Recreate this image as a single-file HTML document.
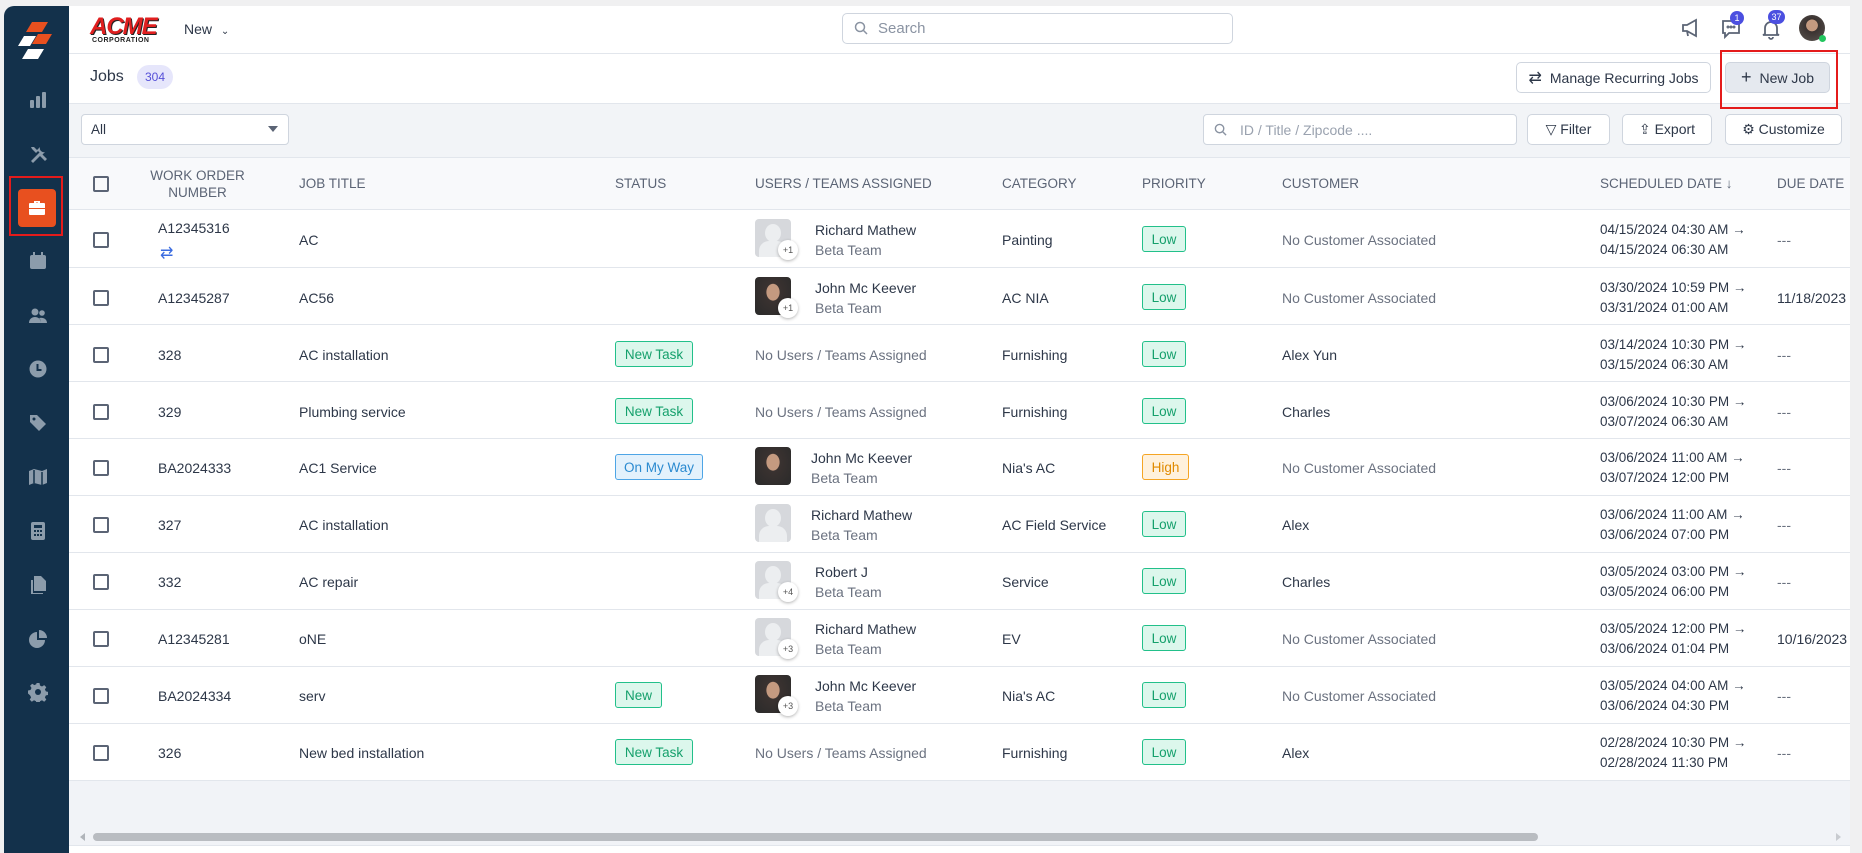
<!DOCTYPE html>
<html><head><meta charset="utf-8"><style>
*{box-sizing:border-box;margin:0;padding:0}
body{width:1862px;height:853px;overflow:hidden;background:#f0f0f1;font-family:"Liberation Sans",sans-serif;color:#2d3748;position:relative}
.a{position:absolute}
#side{left:4px;top:6px;width:65px;height:847px;background:#13314b;border-top-left-radius:10px}
.si{position:absolute;left:24px;width:20px;height:20px;fill:#8c9cab}
#main{left:69px;top:6px;width:1781px;height:847px;background:#fff}
.btn{position:absolute;border:1px solid #cfd5de;border-radius:5px;background:#fff;font-size:14px;color:#2d3748;display:flex;align-items:center;justify-content:center;gap:8px}
.th{position:absolute;font-size:13.5px;color:#5b6475;top:176px}
.cb{position:absolute;left:93px;width:16px;height:16px;border:2px solid #5b6475;border-radius:2px}
.row{position:absolute;left:69px;width:1781px;height:57px;border-bottom:1px solid #e2e6ec}
.t{position:absolute;font-size:14px;white-space:nowrap}
.g{color:#6b7280}
.bd{position:absolute;height:26px;border:1px solid #22c08a;background:#dcf7ec;color:#15a06c;border-radius:3px;font-size:13.5px;display:flex;align-items:center;justify-content:center}
.av{position:absolute;width:36px;height:38px;border-radius:4px;background:#d6d8dc;overflow:hidden}
.pn{position:absolute;width:20px;height:20px;border-radius:50%;background:#fff;box-shadow:0 1px 3px rgba(0,0,0,.3);font-size:9px;color:#555;display:flex;align-items:center;justify-content:center}
</style></head><body>
<div id="side" class="a">
<svg class="a" style="left:14px;top:16px" width="36" height="42" viewBox="0 0 36 42"><polygon points="14,0 30,0 24,10 8,10" fill="#e8501f"/><polygon points="20,12 34,12 28,22 14,22" fill="#e8501f"/><polygon points="6,14 18,14 12,24 0,24" fill="#fff"/><polygon points="10,27 26,27 20,37 4,37" fill="#fff"/></svg>
<svg class="si" style="top:84px" viewBox="0 0 20 20"><rect x="2" y="10" width="4" height="8" rx="1"/><rect x="8" y="6" width="4" height="12" rx="1"/><rect x="14" y="2" width="4" height="16" rx="1"/></svg>
<svg class="si" style="top:138px" viewBox="0 0 20 20"><path d="M3 17 L13 7 L15 9 L5 19Z M12 3a4 4 0 0 0 5 5l-3 3-5-5z M3 3l3 0 4 4-2 2-4-4z M12 12l2-2 5 5-2 2z"/></svg>
<div class="a" style="left:5px;top:170px;width:54px;height:60px;border:2px solid #e41b1b"></div>
<div class="a" style="left:14px;top:183px;width:38px;height:38px;background:#e8501f;border-radius:4px"></div>
<svg class="a" style="left:23px;top:192px" width="20" height="20" viewBox="0 0 20 20" fill="#fff"><path d="M7 3h6v2h4a1 1 0 0 1 1 1v4H2V6a1 1 0 0 1 1-1h4z M9 5h2V4.5H9z M2 11h16v5a1 1 0 0 1-1 1H3a1 1 0 0 1-1-1z"/></svg>
<svg class="si" style="top:245px" viewBox="0 0 20 20"><rect x="2" y="4" width="16" height="14" rx="2"/><rect x="5" y="1" width="2" height="4"/><rect x="13" y="1" width="2" height="4"/></svg>
<svg class="si" style="top:300px" viewBox="0 0 20 20"><circle cx="7" cy="6" r="3.5"/><circle cx="14" cy="7" r="2.8"/><path d="M1 17c0-4 3-6 6-6s6 2 6 6z M13 17c0-3-1-4-2-5 4-1 8 1 8 5z"/></svg>
<svg class="si" style="top:353px" viewBox="0 0 20 20"><circle cx="10" cy="10" r="8.5"/><path d="M9.5 5v6h4" stroke="#13314b" stroke-width="2" fill="none"/></svg>
<svg class="si" style="top:407px" viewBox="0 0 20 20"><path d="M2 2h7l9 9-7 7-9-9z"/><circle cx="6" cy="6" r="1.5" fill="#13314b"/></svg>
<svg class="si" style="top:461px" viewBox="0 0 20 20"><path d="M1 4l5-2 8 2 5-2v14l-5 2-8-2-5 2z"/><path d="M6 3v13M14 5v13" stroke="#13314b" stroke-width="1.5"/></svg>
<svg class="si" style="top:515px" viewBox="0 0 20 20"><rect x="3" y="1" width="14" height="18" rx="2"/><rect x="6" y="4" width="8" height="3" fill="#13314b"/><g fill="#13314b"><rect x="6" y="9" width="2" height="2"/><rect x="9" y="9" width="2" height="2"/><rect x="12" y="9" width="2" height="2"/><rect x="6" y="13" width="2" height="2"/><rect x="9" y="13" width="2" height="2"/><rect x="12" y="13" width="2" height="2"/></g></svg>
<svg class="si" style="top:569px" viewBox="0 0 20 20"><path d="M6 1h7l5 5v10H6z"/><path d="M3 5h2v13h10v1H3z"/></svg>
<svg class="si" style="top:623px" viewBox="0 0 20 20"><path d="M9 3a8 8 0 1 0 8 8H9z"/><path d="M11 1a8 8 0 0 1 8 8h-8z"/></svg>
<svg class="si" style="top:676px" viewBox="0 0 20 20"><path d="M8.5 1h3l.5 2.5 2 1 2.2-1.4 2.1 2.1-1.4 2.2 1 2 2.5.5v3l-2.5.5-1 2 1.4 2.2-2.1 2.1-2.2-1.4-2 1-.5 2.5h-3l-.5-2.5-2-1-2.2 1.4-2.1-2.1 1.4-2.2-1-2L0 11.5v-3l2.5-.5 1-2-1.4-2.2 2.1-2.1L6.4 3.1l2-1z"/><circle cx="10" cy="10" r="3" fill="#13314b"/></svg>
</div>
<div id="main" class="a"></div>
<!-- header -->
<div class="a" style="left:69px;top:53px;width:1781px;height:1px;background:#e2e6ec"></div>
<div class="a" style="left:90px;top:13px;font:900 italic 24px 'Liberation Sans';color:#e01f1f;letter-spacing:-1px;text-shadow:1px 1px 0 #222">ACME</div>
<div class="a" style="left:92px;top:37px;font:bold 7px 'Liberation Sans';color:#222;letter-spacing:.5px">CORPORATION</div>
<div class="a" style="left:184px;top:21px;font-size:14px">New <span style="font-size:10px;margin-left:5px">&#8964;</span></div>
<div class="a" style="left:842px;top:13px;width:391px;height:31px;border:1px solid #cfd5de;border-radius:5px"></div>
<svg class="a" style="left:854px;top:21px" width="14" height="14" viewBox="0 0 14 14"><circle cx="6" cy="6" r="4.5" stroke="#8a93a2" stroke-width="1.5" fill="none"/><path d="M9.5 9.5l3.5 3.5" stroke="#8a93a2" stroke-width="1.5"/></svg>
<div class="a" style="left:878px;top:20px;font-size:15px;color:#8a93a2">Search</div>
<svg class="a" style="left:1680px;top:18px" width="22" height="20" viewBox="0 0 22 20" fill="none" stroke="#5b6475" stroke-width="1.8"><path d="M3 7h4l9-5v16l-9-5H3z M7 13l1 5"/></svg>
<svg class="a" style="left:1720px;top:18px" width="22" height="22" viewBox="0 0 22 22" fill="none" stroke="#5b6475" stroke-width="1.8"><path d="M3 3h16v12H9l-4 4v-4H3z"/><circle cx="8" cy="9" r=".6"/><circle cx="11" cy="9" r=".6"/><circle cx="14" cy="9" r=".6"/></svg>
<div class="a" style="left:1730px;top:11px;width:14px;height:14px;border-radius:50%;background:#4b4fe0;color:#fff;font-size:9px;text-align:center;line-height:14px">1</div>
<svg class="a" style="left:1760px;top:18px" width="22" height="22" viewBox="0 0 22 22" fill="none" stroke="#5b6475" stroke-width="1.8"><path d="M5 16V10a6 6 0 0 1 12 0v6l2 1H3z M9 19a2 2 0 0 0 4 0"/></svg>
<div class="a" style="left:1768px;top:10px;width:17px;height:14px;border-radius:7px;background:#4b4fe0;color:#fff;font-size:9px;text-align:center;line-height:14px">37</div>
<div class="a" style="left:1799px;top:15px;width:26px;height:26px;border-radius:50%;background:radial-gradient(circle at 50% 40%,#c49a80 0 28%,#3a3230 30%,#5b5550 100%)"></div>
<div class="a" style="left:1819px;top:35px;width:7px;height:7px;border-radius:50%;background:#22c55e"></div>
<!-- jobs bar -->
<div class="a" style="left:90px;top:68px;font-size:16px">Jobs</div>
<div class="a" style="left:137px;top:65px;width:36px;height:24px;border-radius:12px;background:#e6e6fb;color:#5650d8;font-size:12px;text-align:center;line-height:24px">304</div>
<div class="btn" style="left:1516px;top:62px;width:195px;height:31px"><span style="font-size:16px">&#8644;</span>Manage Recurring Jobs</div>
<div class="btn" style="left:1725px;top:62px;width:105px;height:31px;background:#e5e9ef"><span style="font-size:18px">+</span>New Job</div>
<div class="a" style="left:69px;top:103px;width:1781px;height:1px;background:#e2e6ec"></div>
<!-- filter bar -->
<div class="a" style="left:69px;top:104px;width:1781px;height:54px;background:#f2f4f7;border-bottom:1px solid #e2e6ec"></div>
<div class="a" style="left:1720px;top:50px;width:118px;height:59px;border:2px solid #e41b1b"></div>
<div class="a" style="left:81px;top:114px;width:208px;height:31px;background:#fff;border:1px solid #cfd5de;border-radius:4px"></div>
<div class="a" style="left:91px;top:122px;font-size:13.5px">All</div>
<div class="a" style="left:268px;top:126px;border:5px solid transparent;border-top:6px solid #5b6475"></div>
<div class="a" style="left:1203px;top:114px;width:314px;height:31px;background:#fff;border:1px solid #cfd5de;border-radius:4px"></div>
<svg class="a" style="left:1214px;top:123px" width="13" height="13" viewBox="0 0 14 14"><circle cx="6" cy="6" r="4.5" stroke="#8a93a2" stroke-width="1.5" fill="none"/><path d="M9.5 9.5l3.5 3.5" stroke="#8a93a2" stroke-width="1.5"/></svg>
<div class="a" style="left:1240px;top:122px;font-size:14px;color:#9aa2af">ID / Title / Zipcode ....</div>
<div class="btn" style="left:1527px;top:114px;width:83px;height:31px">&#9661; Filter</div>
<div class="btn" style="left:1622px;top:114px;width:90px;height:31px">&#8682; Export</div>
<div class="btn" style="left:1725px;top:114px;width:117px;height:31px">&#9881; Customize</div>
<!-- table header -->
<div class="a" style="left:69px;top:158px;width:1781px;height:52px;background:#f8f9fb;border-bottom:1px solid #e2e6ec"></div>
<div class="cb" style="top:176px"></div>
<div class="th" style="left:150px;top:167px;width:95px;text-align:center;line-height:17px">WORK ORDER NUMBER</div>
<div class="th" style="left:299px">JOB TITLE</div>
<div class="th" style="left:615px">STATUS</div>
<div class="th" style="left:755px">USERS / TEAMS ASSIGNED</div>
<div class="th" style="left:1002px">CATEGORY</div>
<div class="th" style="left:1142px">PRIORITY</div>
<div class="th" style="left:1282px">CUSTOMER</div>
<div class="th" style="left:1600px">SCHEDULED DATE &#8595;</div>
<div class="th" style="left:1777px">DUE DATE</div>

<!-- rows -->
<div class="row" style="top:211px"></div><div class="row" style="top:268px"></div><div class="row" style="top:325px"></div><div class="row" style="top:382px"></div><div class="row" style="top:439px"></div><div class="row" style="top:496px"></div><div class="row" style="top:553px"></div><div class="row" style="top:610px"></div><div class="row" style="top:667px"></div><div class="row" style="top:724px"></div>
<div class="a" style="left:69px;top:781px;width:1781px;height:72px;background:#f1f3f7"></div>

<div class="cb" style="top:232px"></div>
<div class="t" style="left:158px;top:220px">A12345316</div>
<div class="t" style="left:160px;top:243px;color:#3b6ce0;font-size:16px">&#8644;</div>
<div class="t" style="left:299px;top:232px">AC</div>
<div class="av" style="left:755px;top:219px"><div class="a" style="left:10px;top:5px;width:16px;height:18px;border-radius:50%;background:#eceef0"></div><div class="a" style="left:4px;top:22px;width:28px;height:20px;border-radius:10px 10px 0 0;background:#eceef0"></div></div><div class="pn" style="left:778px;top:240px">+1</div>
<div class="t" style="left:815px;top:222px">Richard Mathew</div><div class="t g" style="left:815px;top:242px">Beta Team</div>
<div class="t" style="left:1002px;top:232px">Painting</div>
<div class="bd" style="left:1142px;top:226px;width:44px">Low</div>
<div class="t g" style="left:1282px;top:232px">No Customer Associated</div>
<div class="t" style="left:1600px;top:222px;font-size:13.5px">04/15/2024 04:30 AM &#8594;</div><div class="t" style="left:1600px;top:242px;font-size:13.5px">04/15/2024 06:30 AM</div>
<div class="t g" style="left:1777px;top:232px">---</div>

<div class="cb" style="top:290px"></div>
<div class="t" style="left:158px;top:290px">A12345287</div>
<div class="t" style="left:299px;top:290px">AC56</div>
<div class="av" style="left:755px;top:277px;background:radial-gradient(ellipse at 50% 40%,#c49a80 0 25%,#3a3230 27%,#2a2a2a 100%)"></div><div class="pn" style="left:778px;top:298px">+1</div>
<div class="t" style="left:815px;top:280px">John Mc Keever</div><div class="t g" style="left:815px;top:300px">Beta Team</div>
<div class="t" style="left:1002px;top:290px">AC NIA</div>
<div class="bd" style="left:1142px;top:284px;width:44px">Low</div>
<div class="t g" style="left:1282px;top:290px">No Customer Associated</div>
<div class="t" style="left:1600px;top:280px;font-size:13.5px">03/30/2024 10:59 PM &#8594;</div><div class="t" style="left:1600px;top:300px;font-size:13.5px">03/31/2024 01:00 AM</div>
<div class="t" style="left:1777px;top:290px">11/18/2023</div>

<div class="cb" style="top:347px"></div>
<div class="t" style="left:158px;top:347px">328</div>
<div class="t" style="left:299px;top:347px">AC installation</div>
<div class="bd" style="left:615px;top:341px;width:78px">New Task</div>
<div class="t g" style="left:755px;top:347px">No Users / Teams Assigned</div>
<div class="t" style="left:1002px;top:347px">Furnishing</div>
<div class="bd" style="left:1142px;top:341px;width:44px">Low</div>
<div class="t" style="left:1282px;top:347px">Alex Yun</div>
<div class="t" style="left:1600px;top:337px;font-size:13.5px">03/14/2024 10:30 PM &#8594;</div><div class="t" style="left:1600px;top:357px;font-size:13.5px">03/15/2024 06:30 AM</div>
<div class="t g" style="left:1777px;top:347px">---</div>

<div class="cb" style="top:404px"></div>
<div class="t" style="left:158px;top:404px">329</div>
<div class="t" style="left:299px;top:404px">Plumbing service</div>
<div class="bd" style="left:615px;top:398px;width:78px">New Task</div>
<div class="t g" style="left:755px;top:404px">No Users / Teams Assigned</div>
<div class="t" style="left:1002px;top:404px">Furnishing</div>
<div class="bd" style="left:1142px;top:398px;width:44px">Low</div>
<div class="t" style="left:1282px;top:404px">Charles</div>
<div class="t" style="left:1600px;top:394px;font-size:13.5px">03/06/2024 10:30 PM &#8594;</div><div class="t" style="left:1600px;top:414px;font-size:13.5px">03/07/2024 06:30 AM</div>
<div class="t g" style="left:1777px;top:404px">---</div>

<div class="cb" style="top:460px"></div>
<div class="t" style="left:158px;top:460px">BA2024333</div>
<div class="t" style="left:299px;top:460px">AC1 Service</div>
<div class="bd" style="left:615px;top:454px;width:88px;border-color:#4ea5e6;background:#e3f1fc;color:#2b8ad0">On My Way</div>
<div class="av" style="left:755px;top:447px;background:radial-gradient(ellipse at 50% 40%,#c49a80 0 25%,#3a3230 27%,#2a2a2a 100%)"></div>
<div class="t" style="left:811px;top:450px">John Mc Keever</div><div class="t g" style="left:811px;top:470px">Beta Team</div>
<div class="t" style="left:1002px;top:460px">Nia's AC</div>
<div class="bd" style="left:1142px;top:454px;width:47px;border-color:#f5a524;background:#fff1dc;color:#e08a00">High</div>
<div class="t g" style="left:1282px;top:460px">No Customer Associated</div>
<div class="t" style="left:1600px;top:450px;font-size:13.5px">03/06/2024 11:00 AM &#8594;</div><div class="t" style="left:1600px;top:470px;font-size:13.5px">03/07/2024 12:00 PM</div>
<div class="t g" style="left:1777px;top:460px">---</div>

<div class="cb" style="top:517px"></div>
<div class="t" style="left:158px;top:517px">327</div>
<div class="t" style="left:299px;top:517px">AC installation</div>
<div class="av" style="left:755px;top:504px"><div class="a" style="left:10px;top:5px;width:16px;height:18px;border-radius:50%;background:#eceef0"></div><div class="a" style="left:4px;top:22px;width:28px;height:20px;border-radius:10px 10px 0 0;background:#eceef0"></div></div>
<div class="t" style="left:811px;top:507px">Richard Mathew</div><div class="t g" style="left:811px;top:527px">Beta Team</div>
<div class="t" style="left:1002px;top:517px">AC Field Service</div>
<div class="bd" style="left:1142px;top:511px;width:44px">Low</div>
<div class="t" style="left:1282px;top:517px">Alex</div>
<div class="t" style="left:1600px;top:507px;font-size:13.5px">03/06/2024 11:00 AM &#8594;</div><div class="t" style="left:1600px;top:527px;font-size:13.5px">03/06/2024 07:00 PM</div>
<div class="t g" style="left:1777px;top:517px">---</div>

<div class="cb" style="top:574px"></div>
<div class="t" style="left:158px;top:574px">332</div>
<div class="t" style="left:299px;top:574px">AC repair</div>
<div class="av" style="left:755px;top:561px"><div class="a" style="left:10px;top:5px;width:16px;height:18px;border-radius:50%;background:#eceef0"></div><div class="a" style="left:4px;top:22px;width:28px;height:20px;border-radius:10px 10px 0 0;background:#eceef0"></div></div><div class="pn" style="left:778px;top:582px">+4</div>
<div class="t" style="left:815px;top:564px">Robert J</div><div class="t g" style="left:815px;top:584px">Beta Team</div>
<div class="t" style="left:1002px;top:574px">Service</div>
<div class="bd" style="left:1142px;top:568px;width:44px">Low</div>
<div class="t" style="left:1282px;top:574px">Charles</div>
<div class="t" style="left:1600px;top:564px;font-size:13.5px">03/05/2024 03:00 PM &#8594;</div><div class="t" style="left:1600px;top:584px;font-size:13.5px">03/05/2024 06:00 PM</div>
<div class="t g" style="left:1777px;top:574px">---</div>

<div class="cb" style="top:631px"></div>
<div class="t" style="left:158px;top:631px">A12345281</div>
<div class="t" style="left:299px;top:631px">oNE</div>
<div class="av" style="left:755px;top:618px"><div class="a" style="left:10px;top:5px;width:16px;height:18px;border-radius:50%;background:#eceef0"></div><div class="a" style="left:4px;top:22px;width:28px;height:20px;border-radius:10px 10px 0 0;background:#eceef0"></div></div><div class="pn" style="left:778px;top:639px">+3</div>
<div class="t" style="left:815px;top:621px">Richard Mathew</div><div class="t g" style="left:815px;top:641px">Beta Team</div>
<div class="t" style="left:1002px;top:631px">EV</div>
<div class="bd" style="left:1142px;top:625px;width:44px">Low</div>
<div class="t g" style="left:1282px;top:631px">No Customer Associated</div>
<div class="t" style="left:1600px;top:621px;font-size:13.5px">03/05/2024 12:00 PM &#8594;</div><div class="t" style="left:1600px;top:641px;font-size:13.5px">03/06/2024 01:04 PM</div>
<div class="t" style="left:1777px;top:631px">10/16/2023</div>

<div class="cb" style="top:688px"></div>
<div class="t" style="left:158px;top:688px">BA2024334</div>
<div class="t" style="left:299px;top:688px">serv</div>
<div class="bd" style="left:615px;top:682px;width:47px">New</div>
<div class="av" style="left:755px;top:675px;background:radial-gradient(ellipse at 50% 40%,#c49a80 0 25%,#3a3230 27%,#2a2a2a 100%)"></div><div class="pn" style="left:778px;top:696px">+3</div>
<div class="t" style="left:815px;top:678px">John Mc Keever</div><div class="t g" style="left:815px;top:698px">Beta Team</div>
<div class="t" style="left:1002px;top:688px">Nia's AC</div>
<div class="bd" style="left:1142px;top:682px;width:44px">Low</div>
<div class="t g" style="left:1282px;top:688px">No Customer Associated</div>
<div class="t" style="left:1600px;top:678px;font-size:13.5px">03/05/2024 04:00 AM &#8594;</div><div class="t" style="left:1600px;top:698px;font-size:13.5px">03/06/2024 04:30 PM</div>
<div class="t g" style="left:1777px;top:688px">---</div>

<div class="cb" style="top:745px"></div>
<div class="t" style="left:158px;top:745px">326</div>
<div class="t" style="left:299px;top:745px">New bed installation</div>
<div class="bd" style="left:615px;top:739px;width:78px">New Task</div>
<div class="t g" style="left:755px;top:745px">No Users / Teams Assigned</div>
<div class="t" style="left:1002px;top:745px">Furnishing</div>
<div class="bd" style="left:1142px;top:739px;width:44px">Low</div>
<div class="t" style="left:1282px;top:745px">Alex</div>
<div class="t" style="left:1600px;top:735px;font-size:13.5px">02/28/2024 10:30 PM &#8594;</div><div class="t" style="left:1600px;top:755px;font-size:13.5px">02/28/2024 11:30 PM</div>
<div class="t g" style="left:1777px;top:745px">---</div>

<div class="a" style="left:1850px;top:6px;width:12px;height:847px;background:#f0f0f1"></div>
<div class="a" style="left:76px;top:833px;border:4px solid transparent;border-right:5px solid #b0b4ba"></div>
<div class="a" style="left:93px;top:833px;width:1445px;height:8px;border-radius:4px;background:#b9bcc1"></div>
<div class="a" style="left:1836px;top:833px;border:4px solid transparent;border-left:5px solid #c8cbd0"></div>
<div class="a" style="left:69px;top:845px;width:1781px;height:8px;background:#fff;border-top:1px solid #e2e6ec"></div>
</body></html>
